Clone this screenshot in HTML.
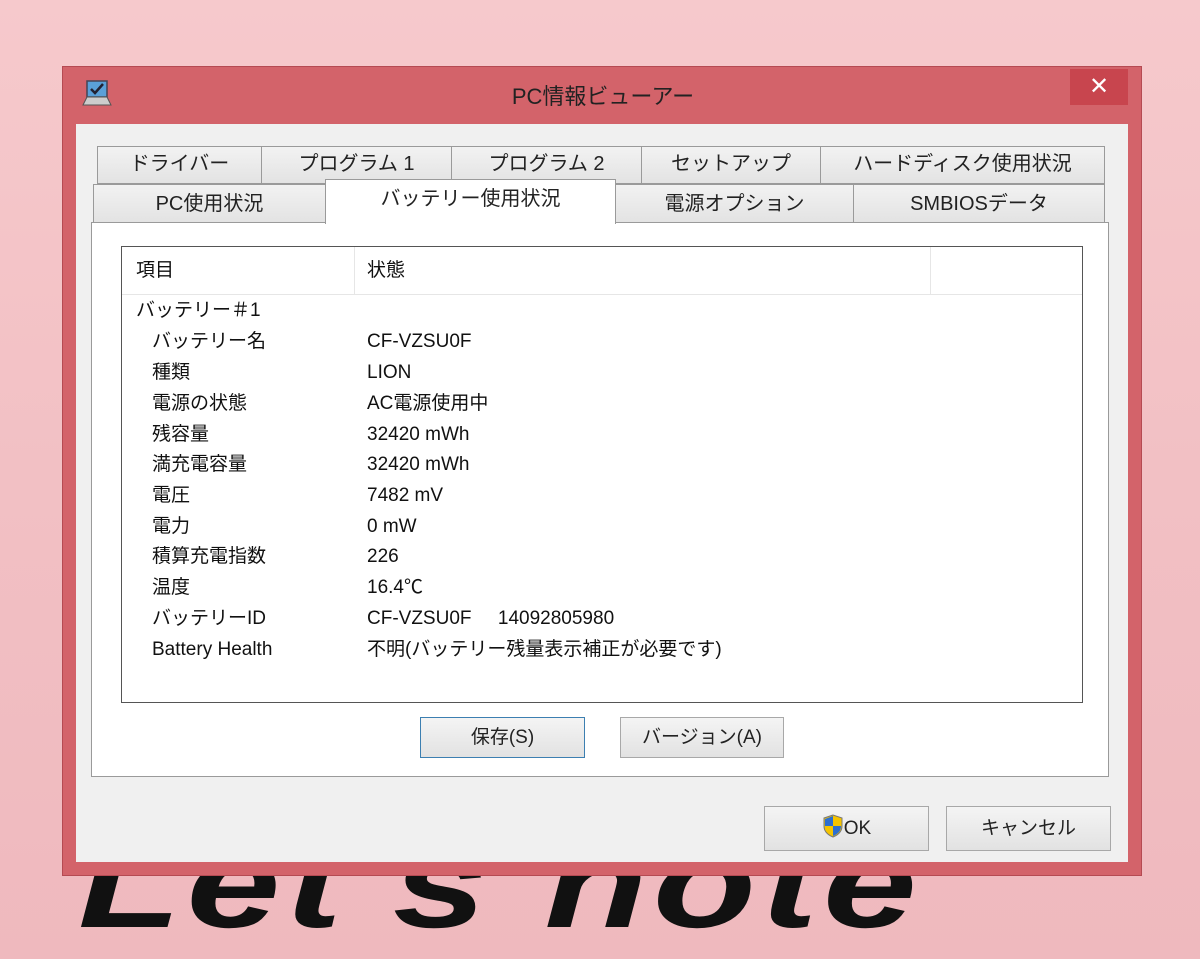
<!DOCTYPE html>
<html><head><meta charset="utf-8"><style>
*{margin:0;padding:0;box-sizing:border-box}
html,body{width:1200px;height:959px;overflow:hidden}
body{position:relative;background:linear-gradient(180deg,#f6c9cc 0%,#f2c0c4 50%,#efb9be 100%);font-family:"Liberation Sans","Noto Sans CJK JP",sans-serif;color:#111}
.abs{position:absolute}
.logo{left:78px;top:822px;font:italic 900 125px/1 "Liberation Sans",sans-serif;color:#111;letter-spacing:4px;transform:scaleX(1.35);transform-origin:left top;white-space:nowrap}
.win{left:62px;top:66px;width:1080px;height:810px;background:#d3636a;border:1px solid #b54a52}
.title{left:0;width:1080px;top:15px;text-align:center;font-size:22px;line-height:30px;color:#222}
.close{left:1007px;top:2px;width:58px;height:36px;background:#c8454e;color:#fff;font-size:24px;text-align:center;line-height:36px}
.client{left:13px;top:57px;width:1052px;height:738px;background:#f0f0f0}
.tab{position:absolute;background:linear-gradient(#f2f2f2,#e3e3e3);border:1px solid #9a9a9a;font-size:20px;text-align:center;line-height:34px;color:#222}
.panel{left:15px;top:98px;width:1018px;height:555px;background:#fff;border:1px solid #9a9a9a}
.list{left:29px;top:23px;width:962px;height:457px;border:1px solid #555;background:#fff}
.hdr{left:0;top:0;width:960px;height:48px;border-bottom:1px solid #e6e6e6;font-size:19px;line-height:48px}
.row{position:absolute;font-size:19px;line-height:30px;left:0;width:900px;height:30px}
.row span{line-height:30px;top:0}
.row .a{position:absolute;left:30px}
.row .b{position:absolute;left:245px}
.btn{position:absolute;background:linear-gradient(#f4f4f4,#e2e2e2);border:1px solid #a8a8a8;font-size:19px;text-align:center;color:#222}
</style></head><body>
<div class="abs logo">Let's note</div>
<div class="abs win">
 <svg class="abs" style="left:18px;top:12px" width="32" height="30" viewBox="0 0 32 30"><rect x="6" y="2" width="20" height="16" fill="#5aa0d8" stroke="#445" stroke-width="1.5"/><path d="M10 10l4 4 8-9" stroke="#223" stroke-width="2.5" fill="none"/><path d="M2 26l4-8h20l4 8z" fill="#ccc" stroke="#555"/></svg>
 <div class="abs title">PC情報ビューアー</div>
 <div class="abs close">✕</div>
 <div class="abs client">
  <div class="tab" style="left:21px;top:22px;width:165px;height:38px">ドライバー</div>
  <div class="tab" style="left:185px;top:22px;width:191px;height:38px">プログラム 1</div>
  <div class="tab" style="left:375px;top:22px;width:191px;height:38px">プログラム 2</div>
  <div class="tab" style="left:565px;top:22px;width:180px;height:38px">セットアップ</div>
  <div class="tab" style="left:744px;top:22px;width:285px;height:38px">ハードディスク使用状況</div>
  <div class="tab" style="left:17px;top:60px;width:233px;height:39px;line-height:38px">PC使用状況</div>
  <div class="tab" style="left:539px;top:60px;width:239px;height:39px;line-height:38px">電源オプション</div>
  <div class="tab" style="left:777px;top:60px;width:252px;height:39px;line-height:38px">SMBIOSデータ</div>
  <div class="abs panel">
   <div class="abs list">
    <div class="abs hdr">
     <span class="abs" style="left:14px;top:0">項目</span>
     <div class="abs" style="left:232px;top:0;height:48px;border-left:1px solid #e6e6e6"></div>
     <span class="abs" style="left:245px;top:0">状態</span>
     <div class="abs" style="left:808px;top:0;height:48px;border-left:1px solid #e6e6e6"></div>
    </div>
    <div class="row" style="top:49px"><span class="abs" style="left:14px">バッテリー＃1</span></div>
    <div class="row" style="top:80px"><span class="a">バッテリー名</span><span class="b">CF-VZSU0F</span></div>
    <div class="row" style="top:111px"><span class="a">種類</span><span class="b">LION</span></div>
    <div class="row" style="top:142px"><span class="a">電源の状態</span><span class="b">AC電源使用中</span></div>
    <div class="row" style="top:173px"><span class="a">残容量</span><span class="b">32420 mWh</span></div>
    <div class="row" style="top:203px"><span class="a">満充電容量</span><span class="b">32420 mWh</span></div>
    <div class="row" style="top:234px"><span class="a">電圧</span><span class="b">7482 mV</span></div>
    <div class="row" style="top:265px"><span class="a">電力</span><span class="b">0 mW</span></div>
    <div class="row" style="top:295px"><span class="a">積算充電指数</span><span class="b">226</span></div>
    <div class="row" style="top:326px"><span class="a">温度</span><span class="b">16.4℃</span></div>
    <div class="row" style="top:357px"><span class="a">バッテリーID</span><span class="b">CF-VZSU0F&nbsp;&nbsp;&nbsp;&nbsp;&nbsp;14092805980</span></div>
    <div class="row" style="top:388px"><span class="a">Battery Health</span><span class="b">不明(バッテリー残量表示補正が必要です)</span></div>
   </div>
   <div class="btn" style="left:328px;top:494px;width:165px;height:41px;line-height:39px;border:1px solid #3c7fb1">保存(S)</div>
   <div class="btn" style="left:528px;top:494px;width:164px;height:41px;line-height:39px">バージョン(A)</div>
  </div>
  <div class="tab" style="left:249px;top:55px;width:291px;height:45px;background:#fff;border-bottom:none;line-height:38px">バッテリー使用状況</div>
  <div class="btn" style="left:688px;top:682px;width:165px;height:45px;line-height:43px"><svg style="vertical-align:-4px" width="22" height="24" viewBox="0 0 22 24"><path d="M11 1L2 4v8c0 6 4 9 9 11 5-2 9-5 9-11V4z" fill="#f5c400" stroke="#777"/><path d="M11 2v10H3V5zM11 12h8c0 5-3 8-8 10z" fill="#2d6fd0"/></svg>OK</div>
  <div class="btn" style="left:870px;top:682px;width:165px;height:45px;line-height:43px">キャンセル</div>
 </div>
</div>
</body></html>
